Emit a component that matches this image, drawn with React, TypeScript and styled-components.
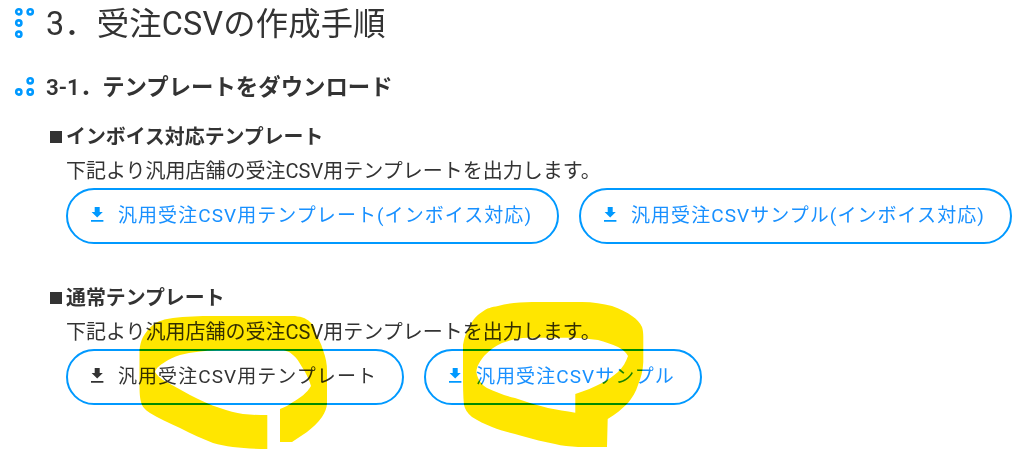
import styled, { createGlobalStyle } from 'styled-components';

const GlobalStyle = createGlobalStyle`
  * {
    box-sizing: border-box;
  }

  body {
    margin: 0;
    background-color: #fff;
    color: #333;
    font-family: Roboto, 'Noto Sans CJK JP', sans-serif;
  }
`;

const Page = styled.main`
  position: relative;
  width: 1023px;
  height: 450px;
  overflow: hidden;
  padding-left: 14px;
`;

const Heading = styled.header`
  display: flex;
  gap: 11px;
`;

const Title = styled.h2`
  height: 48px;
  margin: 0;
  font-size: 32.3px;
  font-weight: 400;
  line-height: 48px;
  letter-spacing: 0.2px;
  white-space: nowrap;
`;

const SubTitle = styled.h3`
  height: 36px;
  margin: 21px 0 0;
  font-size: 22.4px;
  font-weight: 600;
  line-height: 36px;
  white-space: nowrap;
`;

const Dots = styled.svg<{ $top: number }>`
  flex: none;
  width: 21px;
  height: 32px;
  margin-top: ${({ $top }) => $top}px;
  fill: none;
  stroke: #0099ff;
  stroke-width: 2.6;
`;

const Section = styled.section`
  height: 161px;
  padding: 13px 0 0 34px;
`;

const SectionTitle = styled.h4`
  display: flex;
  align-items: center;
  height: 34px;
  margin: 0;
  font-size: 19.9px;
  font-weight: 700;
  line-height: 34px;
  white-space: nowrap;
`;

const Square = styled.span`
  width: 12px;
  height: 12px;
  margin: 0 4px 2px 2px;
  background-color: #333;
`;

const Text = styled.p`
  height: 33px;
  margin: 0 0 0 18px;
  font-size: 20px;
  line-height: 33px;
  white-space: nowrap;
`;

const Buttons = styled.div`
  display: flex;
  gap: 20px;
  margin-left: 18px;
`;

const Button = styled.a<{ $width: number; $dark?: boolean }>`
  display: flex;
  flex: none;
  align-items: center;
  width: ${({ $width }) => $width}px;
  height: 56px;
  padding: 0 0 6px 21px;
  border: 2px solid #0099ff;
  border-radius: 28px;
  color: ${({ $dark }) => ($dark ? '#333' : '#1890ff')};
  font-size: 19px;
  letter-spacing: 1.06px;
  white-space: nowrap;
  cursor: pointer;

  svg {
    flex: none;
    width: 16px;
    height: 18px;
    margin: 2px 13px 0 0;
    fill: ${({ $dark }) => ($dark ? '#333' : '#0099ff')};
  }
`;

// Highlighter strokes lie over the buttons
const Marker = styled.svg`
  position: absolute;
  top: 0;
  left: 0;
  fill: #ffe600;
  mix-blend-mode: multiply;
  pointer-events: none;
`;

interface DownloadProps {
  label: string;
  width: number;
  dark?: boolean;
}

const Download: React.FC<DownloadProps> = ({ label, width, dark }) => (
  <Button $width={width} $dark={dark}>
    <svg viewBox="0 0 16 18">
      <path d="M5.7 2h5v5h3.1L8.2 12.6 2.6 7h3.1zM2 15h12.4v1.7H2z" />
    </svg>
    {label}
  </Button>
);

const App: React.FC = () => (
  <>
    <GlobalStyle />
    <Page>
      <Heading>
        <Dots $top={7} viewBox="0 0 21 32">
          <circle cx="4.8" cy="4.8" r="2.6" />
          <circle cx="16.2" cy="4.8" r="2.6" />
          <circle cx="4.8" cy="16" r="2.6" />
          <circle cx="4.8" cy="27.2" r="2.6" />
        </Dots>
        <Title>3．受注CSVの作成手順</Title>
      </Heading>
      <Heading>
        <Dots $top={28} viewBox="0 0 21 32">
          <circle cx="16.2" cy="4.8" r="2.6" />
          <circle cx="4.8" cy="16" r="2.6" />
          <circle cx="16.2" cy="16" r="2.6" />
        </Dots>
        <SubTitle>3-1．テンプレートをダウンロード</SubTitle>
      </Heading>

      <Section>
        <SectionTitle>
          <Square />
          インボイス対応テンプレート
        </SectionTitle>
        <Text>下記より汎用店舗の受注CSV用テンプレートを出力します。</Text>
        <Buttons>
          <Download label="汎用受注CSV用テンプレート(インボイス対応)" width={493} />
          <Download label="汎用受注CSVサンプル(インボイス対応)" width={433} />
        </Buttons>
      </Section>

      <Section>
        <SectionTitle>
          <Square />
          通常テンプレート
        </SectionTitle>
        <Text>下記より汎用店舗の受注CSV用テンプレートを出力します。</Text>
        <Buttons>
          <Download label="汎用受注CSV用テンプレート" width={338} dark />
          <Download label="汎用受注CSVサンプル" width={278} />
        </Buttons>
      </Section>

      <Marker width="1023" height="450" viewBox="0 0 1023 450">
        <path d="M267.3 415V449C245 449 228 447 213 443C203 439 191 434 180 428C169 423 158 418 150 413C144 409 142 406 141 402C139.500 396 139.500 390 139.500 380V350C140 345 141 341 143 337C146 332 149 328 153 325C158 321 165 319 173 318C185 316.500 200 316 213 316H292C300 316 306 318 310 322C314 325 315 328 315 332C318 338 321 343 323 350C326 358 327 364 327 371V403C327 408 325 412 322 417C318 423 312 428 307 432L292 442H280V409C285 407 289 405 293 402C300 398 307 393 311 386C309 379 306 373 302 367C299 362 297 358 293 355C289 351 285 350.500 280 350.500H217C204 350.500 192 352 180 355C174 357 169 359 165 362C160 365 156 368 155 372C157 375 160 378 163 380C172 385 181 390 190 395C200 400 210 405 220 408C228 411 236 413 243 414C251 415 259 415 267.300 415Z" />
        <path d="M575.300 412.700V394C585 391 594 387 602 383C608 380 613 376 618 372C623 367 626 362 628 356C626 352 622 349 618 347C612 344 605 342 598 340C589 339 580 337.700 572 337.700H528C518 338 510 340 502 343C495 346 490 350 485 355C480 361 476 367 476.500 373C478 380 482 385 487 388C496 392 505 396 515 398C526 402 537 405 548 408C557 410 566 411 575.300 412.700ZM607.700 419L607 447H578C570 446.500 562 446 555 444C544 442 533 439 522 436C512 433 502 431 492 427C485 424 478 421 472 417C467 413 465 409 464 405C463 396 463 385 463 375V345C464 338 466 332 470 327C472 320 476 316 482 312C487 308 492 307 498 306C509 303 520 302.300 532 302H582C593 302 603 304 612 306C620 309 627 312 632 316C637 319 640 323 642 327C643 330 643.300 333 643.300 337V362C643 370 641 378 638 385C636 392 632 398 628 403C622 409 616 414 607.700 419Z" />
      </Marker>
    </Page>
  </>
);

export default App;
